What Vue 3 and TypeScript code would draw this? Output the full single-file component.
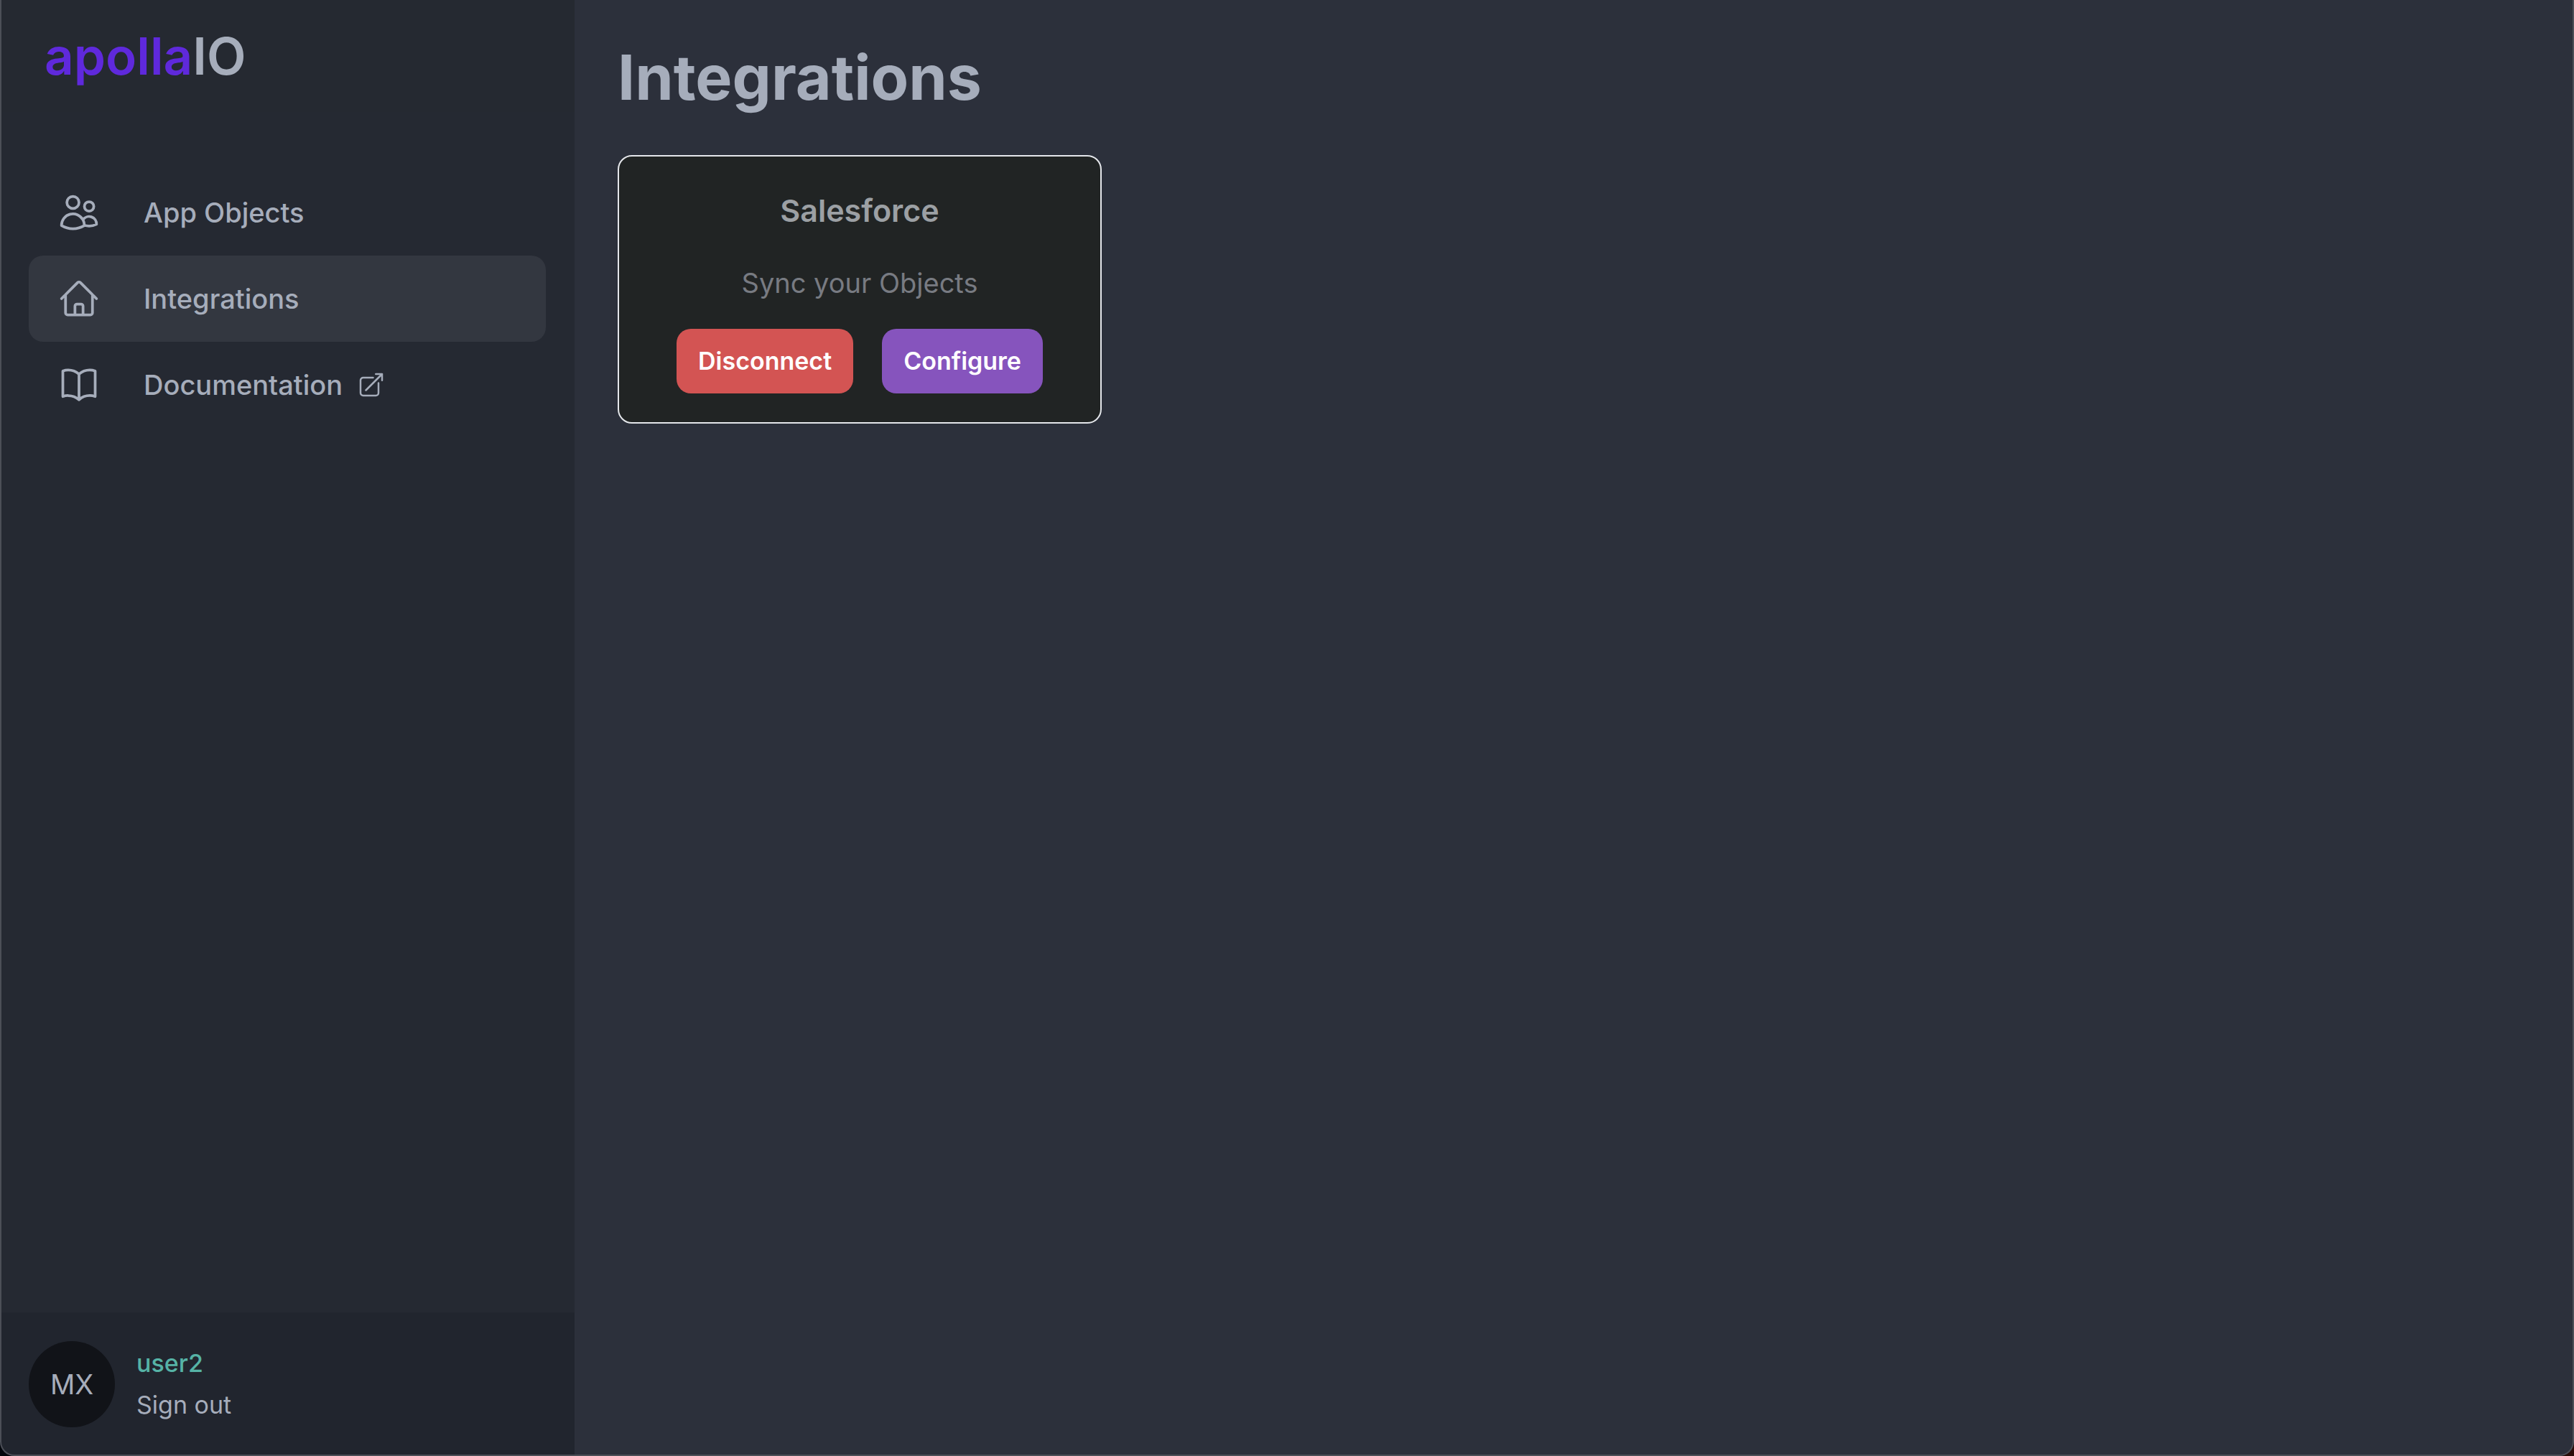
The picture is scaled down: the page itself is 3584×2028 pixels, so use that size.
<script setup lang="ts">
interface NavItem {
  label: string
  paths: string[]
  active?: boolean
  external?: boolean
}

const navItems: NavItem[] = [
  {
    label: 'App Objects',
    paths: [
      'M15 19.128a9.38 9.38 0 002.625.372 9.337 9.337 0 004.121-.952 4.125 4.125 0 00-7.533-2.493M15 19.128v-.003c0-1.113-.285-2.16-.786-3.07M15 19.128v.106A12.318 12.318 0 018.624 21c-2.331 0-4.512-.645-6.374-1.766l-.001-.109a6.375 6.375 0 0111.964-3.07M12 6.375a3.375 3.375 0 11-6.75 0 3.375 3.375 0 016.75 0zm8.25 2.25a2.625 2.625 0 11-5.25 0 2.625 2.625 0 015.25 0z',
    ],
  },
  {
    label: 'Integrations',
    active: true,
    paths: [
      'M2.25 12l8.954-8.955c.44-.439 1.152-.439 1.591 0L21.75 12M4.5 9.75v10.125c0 .621.504 1.125 1.125 1.125H9.75v-4.875c0-.621.504-1.125 1.125-1.125h2.25c.621 0 1.125.504 1.125 1.125V21h4.125c.621 0 1.125-.504 1.125-1.125V9.75M8.25 21h8.25',
    ],
  },
  {
    label: 'Documentation',
    external: true,
    paths: [
      'M12 6.042A8.967 8.967 0 006 3.75c-1.052 0-2.062.18-3 .512v14.25A8.987 8.987 0 016 18c2.305 0 4.408.867 6 2.292m0-14.25a8.966 8.966 0 016-2.292c1.052 0 2.062.18 3 .512v14.25A8.987 8.987 0 0018 18a8.967 8.967 0 00-6 2.292m0-14.25v14.25',
    ],
  },
]
</script>

<template>
  <div class="window">
    <aside class="sidebar">
      <header class="brand">
        <a href="#" class="logo"><span class="logo-accent">apolla</span>IO</a>
      </header>
      <nav class="nav" aria-label="Main">
        <a
          v-for="item in navItems"
          :key="item.label"
          href="#"
          class="nav-link"
          :class="{ active: item.active }"
          :aria-current="item.active ? 'page' : undefined"
        >
          <svg class="nav-icon" viewBox="0 0 24 24" aria-hidden="true">
            <path v-for="d in item.paths" :key="d" :d="d" />
          </svg>
          <span>{{ item.label }}</span>
          <svg v-if="item.external" class="external-icon" viewBox="0 0 24 24" aria-hidden="true">
            <path
              d="M13.5 6H5.25A2.25 2.25 0 003 8.25v10.5A2.25 2.25 0 005.25 21h10.5A2.25 2.25 0 0018 18.75V10.5m-10.5 6L21 3m0 0h-5.25M21 3v5.25"
            />
          </svg>
        </a>
      </nav>
      <footer class="account">
        <div class="avatar">MX</div>
        <div class="account-text">
          <span class="user-name">user2</span>
          <a href="#" class="sign-out">Sign out</a>
        </div>
      </footer>
    </aside>

    <main class="content">
      <h1 class="title">Integrations</h1>
      <section class="card">
        <h2 class="card-title">Salesforce</h2>
        <p class="card-text">Sync your Objects</p>
        <div class="card-actions">
          <button type="button" class="btn btn-danger">Disconnect</button>
          <button type="button" class="btn btn-primary">Configure</button>
        </div>
      </section>
    </main>
  </div>
</template>

<style>
body {
  background: linear-gradient(90deg, #03060c 50%, #2a0d08 50%);
}
</style>

<style scoped>
.window {
  position: relative;
  display: flex;
  min-height: 100vh;
  border-radius: 0 0 20px 20px;
  overflow: hidden;
  background: #2c303b;
  color: #a6adbb;
  font-family: Inter, "Liberation Sans", sans-serif;
  font-size: 38px;
  line-height: 60px;
}

.window::after {
  content: "";
  position: absolute;
  inset: 0;
  border: 2px solid #4c4f57;
  border-top: 0;
  border-radius: 0 0 20px 20px;
  pointer-events: none;
}

a {
  color: inherit;
  text-decoration: none;
}

.sidebar {
  display: flex;
  flex-direction: column;
  flex: 0 0 800px;
  background: #252932;
}

.brand {
  box-sizing: border-box;
  height: 156px;
  padding: 28px 62px;
  background: #252931;
}

.logo {
  display: block;
  font-size: 71px;
  font-weight: 600;
  line-height: 100px;
}

.logo-accent {
  color: #5f29dc;
}

.nav {
  flex: 1;
  padding: 80px 40px;
}

.nav-link {
  display: flex;
  align-items: center;
  height: 120px;
  padding: 0 40px;
  border-radius: 20px;
  font-weight: 500;
}

.nav-link.active {
  background: #333740;
}

.nav-icon {
  width: 60px;
  height: 60px;
  margin-right: 60px;
}

.external-icon {
  width: 40px;
  height: 40px;
  margin-left: 20px;
}

.nav-icon,
.external-icon {
  fill: none;
  stroke: currentColor;
  stroke-width: 1.5;
  stroke-linecap: round;
  stroke-linejoin: round;
}

.account {
  display: flex;
  align-items: center;
  gap: 30px;
  padding: 40px;
  background: #21252e;
}

.avatar {
  display: grid;
  place-items: center;
  width: 120px;
  height: 120px;
  border-radius: 50%;
  background: #111318;
}

.account-text {
  display: flex;
  flex-direction: column;
  font-size: 34px;
  line-height: 58px;
}

.user-name {
  color: #56b3a6;
  font-weight: 500;
}

.content {
  flex: 1;
  padding: 58px 60px;
}

.title {
  margin: 0 0 58px;
  font-size: 86px;
  font-weight: 700;
  line-height: 100px;
}

.card {
  box-sizing: border-box;
  width: fit-content;
  padding: 40px 80px;
  border: 2px solid #e5e7eb;
  border-radius: 20px;
  background: #212424;
  text-align: center;
}

.card-title {
  margin: 0 0 36px;
  color: #9ca0a4;
  font-size: 43px;
  font-weight: 600;
  line-height: 70px;
}

.card-text {
  margin: 0 0 34px;
  color: #787b82;
}

.card-actions {
  display: flex;
  gap: 40px;
}

.btn {
  height: 90px;
  padding: 0 30px;
  border: 0;
  border-radius: 20px;
  color: #fff;
  font: inherit;
  font-size: 34px;
  font-weight: 600;
}

.btn-danger {
  background: #d35453;
}

.btn-primary {
  background: #8654bd;
}
</style>
